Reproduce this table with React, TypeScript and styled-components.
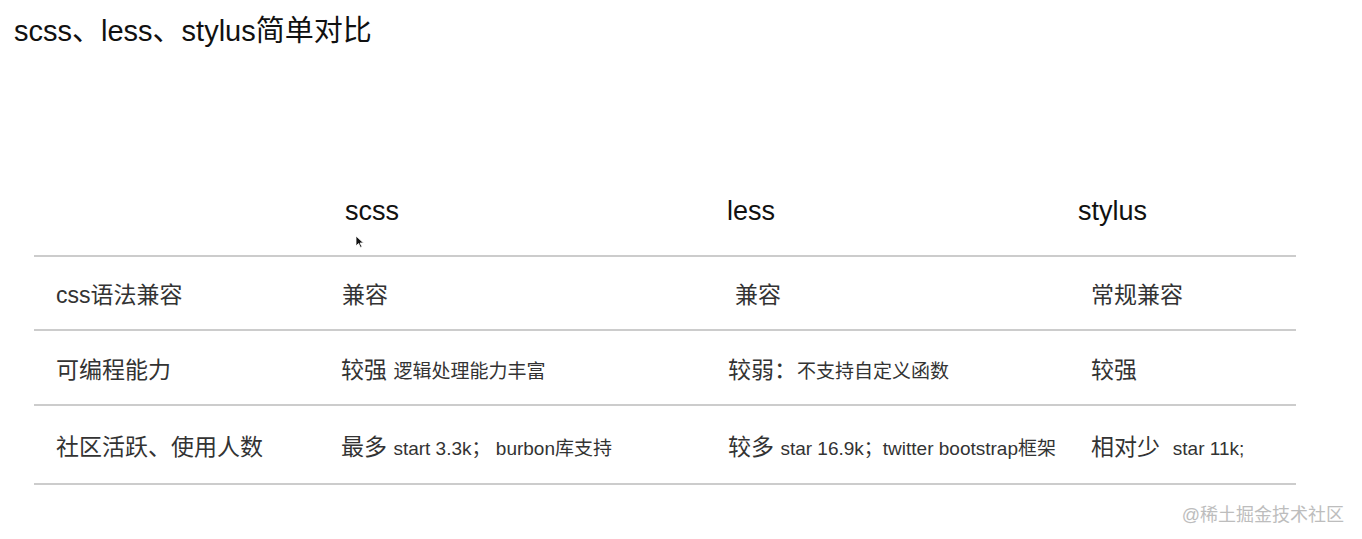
import React from 'react';
import styled, { createGlobalStyle } from 'styled-components';

const GlobalStyle = createGlobalStyle`
    html, body {
        margin: 0;
        padding: 0;
        background: #ffffff;
    }
    body {
        font-family: "Liberation Sans", "Noto Sans CJK SC", sans-serif;
        color: #333333;
    }
`;

const PageDiv = styled.div`
    position: relative;
    width: 1362px;
    height: 539px;
    overflow: hidden;
    background: #ffffff;
`;

const TitleH1 = styled.h1`
    margin: 0;
    padding: 12px 14px 0 14px;
    height: 38px;
    line-height: 38px;
    font-size: 29px;
    font-weight: normal;
    color: #111111;
`;

const TableDiv = styled.div`
    margin: 129px 0 0 34px;
    width: 1262px;
    border-bottom: 2px solid #cccccc;
`;

const RowDiv = styled.div<{ $height: number; $head?: boolean }>`
    display: grid;
    grid-template-columns: 285px 387px 363px 227px;
    align-items: center;
    box-sizing: border-box;
    height: ${p => p.$height}px;
    padding-bottom: ${p => (p.$head ? 11 : 0)}px;
    & + & {
        border-top: 2px solid #cccccc;
    }
`;

const HeadCell = styled.div<{ $shift?: number }>`
    padding-left: ${p => 22 + (p.$shift || 0)}px;
    font-size: 27px;
    color: #111111;
`;

const Cell = styled.div<{ $shift?: number }>`
    padding-left: ${p => 22 + (p.$shift || 0)}px;
    font-size: 23px;
    color: #333333;
    white-space: nowrap;
`;

const Note = styled.span`
    font-size: 19px;
`;

const Watermark = styled.div`
    position: absolute;
    right: 18px;
    top: 500px;
    font-size: 18px;
    color: #bdbdbd;
`;

const Cursor = styled.svg`
    position: absolute;
    left: 355px;
    top: 235px;
`;

function App(): JSX.Element {
    return (
        <PageDiv>
            <GlobalStyle />
            <TitleH1>scss、less、stylus简单对比</TitleH1>
            <TableDiv>
                <RowDiv $height={76} $head>
                    <HeadCell />
                    <HeadCell $shift={4}>scss</HeadCell>
                    <HeadCell $shift={-1}>less</HeadCell>
                    <HeadCell $shift={-13}>stylus</HeadCell>
                </RowDiv>
                <RowDiv $height={74}>
                    <Cell>css语法兼容</Cell>
                    <Cell $shift={1}>兼容</Cell>
                    <Cell $shift={7}>兼容</Cell>
                    <Cell>常规兼容</Cell>
                </RowDiv>
                <RowDiv $height={75}>
                    <Cell>可编程能力</Cell>
                    <Cell>较强 <Note>逻辑处理能力丰富</Note></Cell>
                    <Cell>较弱：<Note>不支持自定义函数</Note></Cell>
                    <Cell>较强</Cell>
                </RowDiv>
                <RowDiv $height={79}>
                    <Cell>社区活跃、使用人数</Cell>
                    <Cell>最多 <Note>start 3.3k；&nbsp;burbon库支持</Note></Cell>
                    <Cell>较多 <Note>star 16.9k；twitter bootstrap框架</Note></Cell>
                    <Cell>相对少&nbsp; <Note>star 11k;</Note></Cell>
                </RowDiv>
            </TableDiv>
            <Watermark>@稀土掘金技术社区</Watermark>
            <Cursor width="9" height="13" viewBox="0 0 9 13">
                <path d="M1 1 L1 11 L3.5 8.5 L5.5 12.5 L7 11.8 L5 8 L8.5 8 Z" fill="#111" stroke="#fff" strokeWidth="0.8" />
            </Cursor>
        </PageDiv>
    );
}

export default App;
